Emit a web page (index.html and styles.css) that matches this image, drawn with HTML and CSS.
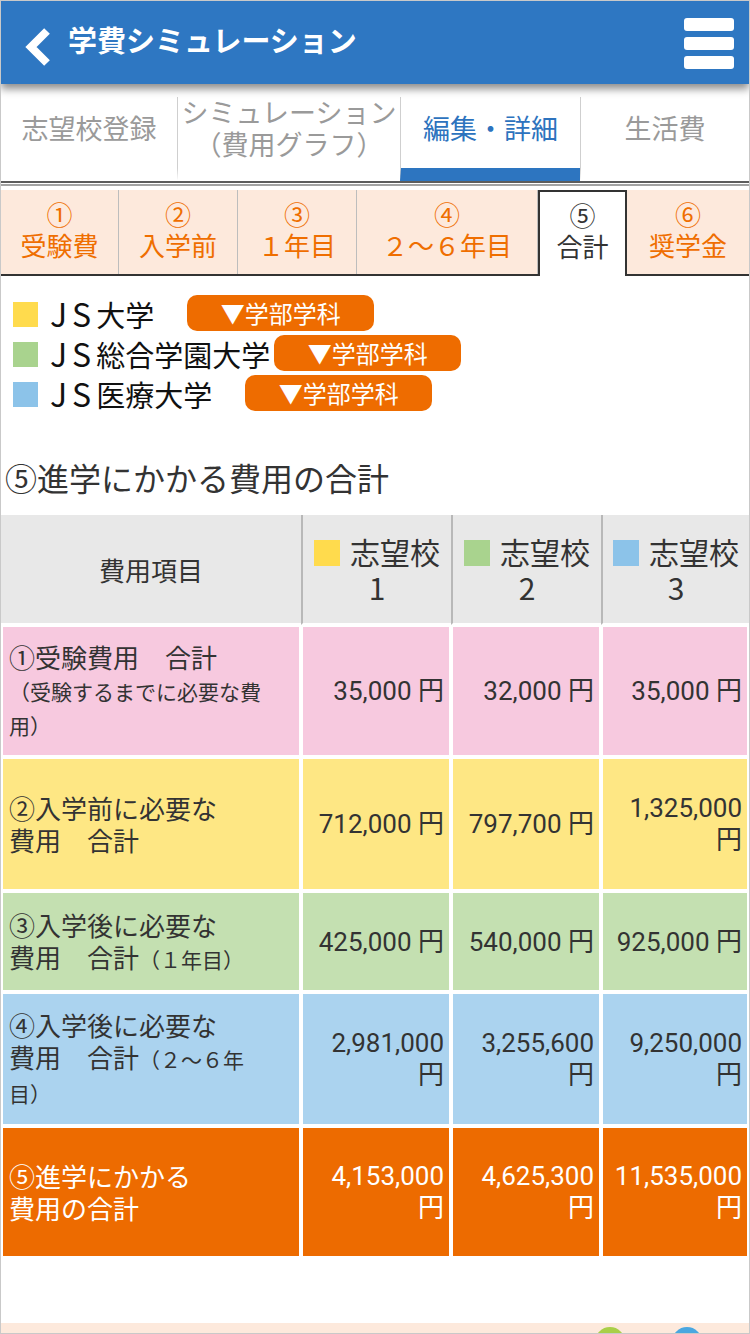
FILE: index.html
```html
<!DOCTYPE html>
<html lang="ja">
<head>
<meta charset="utf-8">
<title>学費シミュレーション</title>
<link rel="stylesheet" href="styles.css">
</head>
<body>
<div class="page">
  <header class="appbar">
    <svg class="back" width="30" height="40" viewBox="0 0 30 40" aria-hidden="true">
      <polyline points="24,4 8,20 24,36" fill="none" stroke="#fff" stroke-width="8" stroke-linejoin="miter"/>
    </svg>
    <h1 class="title">学費シミュレーション</h1>
    <div class="menu"><span></span><span></span><span></span></div>
  </header>

  <nav class="tabs-main">
    <div class="mtab w1">志望校登録</div>
    <div class="mtab w2">シミュレーション<br>（費用グラフ）</div>
    <div class="mtab w3 active">編集・詳細</div>
    <div class="mtab w4">生活費</div>
  </nav>
  <div class="rule"></div>

  <nav class="tabs-sub">
    <div class="stab s1">①<br>受験費</div>
    <div class="stab s2">②<br>入学前</div>
    <div class="stab s3">③<br>１年目</div>
    <div class="stab s4">④<br>２～６年目</div>
    <div class="stab s5 active">⑤<br>合計</div>
    <div class="stab s6">⑥<br>奨学金</div>
  </nav>

  <ul class="legend">
    <li class="legend-item"><span class="sq yellow"></span><span class="uni"><span class="js">JS</span>大学　</span><span class="btn">▼学部学科</span></li>
    <li class="legend-item"><span class="sq green"></span><span class="uni"><span class="js">JS</span>総合学園大学</span><span class="btn">▼学部学科</span></li>
    <li class="legend-item"><span class="sq blue"></span><span class="uni"><span class="js">JS</span>医療大学　</span><span class="btn">▼学部学科</span></li>
  </ul>

  <h2 class="heading">⑤進学にかかる費用の合計</h2>

  <table class="cost">
    <colgroup><col class="c1"><col class="c2"><col class="c3"><col class="c4"></colgroup>
    <thead>
      <tr>
        <th class="hd-item">費用項目</th>
        <th class="hd-school"><span class="hd-line"><span class="sq-s yellow"></span>志望校</span><span class="hd-line">1</span></th>
        <th class="hd-school"><span class="hd-line"><span class="sq-s green"></span>志望校</span><span class="hd-line">2</span></th>
        <th class="hd-school"><span class="hd-line"><span class="sq-s blue"></span>志望校</span><span class="hd-line">3</span></th>
      </tr>
    </thead>
    <tbody>
      <tr class="row h128 pink">
        <td class="label">①受験費用　合計<br><span class="sub">（受験するまでに必要な費用）</span></td>
        <td class="val">35,000 円</td>
        <td class="val">32,000 円</td>
        <td class="val">35,000 円</td>
      </tr>
      <tr class="row h130 yellow">
        <td class="label">②入学前に必要な<br>費用　合計</td>
        <td class="val">712,000 円</td>
        <td class="val">797,700 円</td>
        <td class="val">1,325,000 円</td>
      </tr>
      <tr class="row h97 green">
        <td class="label">③入学後に必要な<br>費用　合計<span class="sub">（１年目）</span></td>
        <td class="val">425,000 円</td>
        <td class="val">540,000 円</td>
        <td class="val">925,000 円</td>
      </tr>
      <tr class="row h130 blue">
        <td class="label">④入学後に必要な<br>費用　合計<span class="sub">（２～６年<br>目）</span></td>
        <td class="val">2,981,000 円</td>
        <td class="val">3,255,600 円</td>
        <td class="val">9,250,000 円</td>
      </tr>
      <tr class="row h128 orange">
        <td class="label">⑤進学にかかる<br>費用の合計</td>
        <td class="val">4,153,000 円</td>
        <td class="val">4,625,300 円</td>
        <td class="val">11,535,000 円</td>
      </tr>
    </tbody>
  </table>

  <div class="spacer"></div>
  <div class="footer-bar"><span class="dot dot-green"></span><span class="dot dot-blue"></span></div>
</div>
</body>
</html>
```

FILE: styles.css
```css
* { box-sizing: border-box; }
html, body { margin: 0; padding: 0; background: #fff; }
body { font-family: "Noto Sans CJK JP", "Noto Sans", sans-serif; color: #333; }

.page {
  width: 750px;
  height: 1334px;
  border: 1px solid #c9c9c9;
  display: flex;
  flex-direction: column;
  overflow: hidden;
}

/* app bar */
.appbar {
  height: 83px;
  flex: none;
  background: #2e77c2;
  display: flex;
  align-items: center;
  padding: 0 15px 0 22px;
  box-shadow: 0 5px 8px rgba(0, 0, 0, 0.45);
  position: relative;
  z-index: 2;
}
.back { flex: none; margin-top: 8px; margin-right: 15px; }
.title {
  margin: 0 0 7px;
  flex: 1;
  font-size: 29px;
  font-weight: 700;
  color: #fff;
  line-height: 1;
}
.menu { display: flex; flex-direction: column; gap: 6px; margin-top: 2px; }
.menu span {
  display: block;
  width: 50px;
  height: 13px;
  background: #fff;
  border-radius: 3px;
}

/* main tabs */
.tabs-main {
  flex: none;
  display: flex;
  margin-top: 13px;
  height: 86px;
  border-bottom: 2px solid #5c5c5c;
}
.mtab {
  display: flex;
  align-items: center;
  justify-content: center;
  text-align: center;
  font-size: 27px;
  line-height: 32px;
  color: #9a9a9a;
  border-left: 1px solid #cfcfcf;
  border-bottom: 13px solid #fff;
  padding-bottom: 10px;
}
.mtab.w1 { width: 176px; border-left: none; }
.mtab.w2 { width: 223px; }
.mtab.w3 { width: 180px; }
.mtab.w4 { width: 169px; }
.mtab.active { color: #2d73be; border-bottom-color: #2d75c0; }
.rule { flex: none; height: 2px; margin-top: 1px; background: #a3a3a3; }

/* sub tabs */
.tabs-sub {
  flex: none;
  display: flex;
  margin-top: 4px;
  height: 86px;
  border-bottom: 2px solid #333;
}
.stab {
  background: #fde9dc;
  color: #ef6e00;
  font-size: 26px;
  line-height: 31px;
  text-align: center;
  display: flex;
  align-items: center;
  justify-content: center;
  border-right: 1px solid #bdbdbd;
  padding-bottom: 6px;
}
.stab.s1 { width: 118px; }
.stab.s2 { width: 119px; }
.stab.s3 { width: 119px; }
.stab.s4 { width: 181px; }
.stab.s5 { width: 89px; }
.stab.s6 { width: 122px; border-right: none; }
.stab.active {
  background: #fff;
  color: #333;
  border: 2px solid #333;
  border-bottom: none;
  margin-bottom: -2px;
  padding-bottom: 8px;
}

/* legend */
.legend {
  flex: none;
  list-style: none;
  margin: 19px 0 0;
  padding: 0 0 0 12px;
  display: flex;
  flex-direction: column;
  gap: 4px;
}
.legend-item { display: flex; align-items: center; height: 36px; }
.sq { width: 25px; height: 25px; flex: none; margin-right: 12px; margin-top: 2px; }
.uni { font-size: 29px; color: #111; line-height: 36px; white-space: pre; }
.js { font-size: 32px; letter-spacing: 5px; }
.btn {
  margin-left: 4px;
  width: 187px;
  height: 36px;
  border-radius: 10px;
  background: #ee6c00;
  color: #fff;
  font-size: 24px;
  line-height: 36px;
  text-align: center;
}
.yellow { background: #ffdb4d; }
.green { background: #a9d38e; }
.blue { background: #8cc3e9; }

/* heading */
.heading {
  flex: none;
  margin: 46px 0 0;
  padding-left: 4px;
  font-size: 32px;
  font-weight: 400;
  line-height: 40px;
  color: #333;
}

/* table */
.cost {
  flex: none;
  margin-top: 18px;
  width: 748px;
  table-layout: fixed;
  border-collapse: separate;
  border-spacing: 0;
}
.c1 { width: 300px; }
.c2 { width: 150px; }
.c3 { width: 150px; }
.c4 { width: 148px; }
.cost th {
  background: #e8e8e8;
  height: 110px;
  padding: 0;
  font-weight: 400;
  color: #333;
  border-bottom: 2px solid #fff;
}
.hd-item { font-size: 26px; }
.hd-school {
  font-size: 30px;
  border-left: 2px solid #b8b8b8;
}
.hd-line { display: block; height: 36px; line-height: 36px; white-space: nowrap; }
.sq-s {
  display: inline-block;
  width: 26px;
  height: 26px;
  margin-right: 10px;
  vertical-align: -2px;
}
.cost td {
  border: 2px solid #fff;
  padding: 0 5px 0 6px;
  vertical-align: middle;
  font-size: 26px;
  line-height: 32px;
  color: #333;
}
.cost td.label { padding-right: 22px; text-align: left; }
.row.h128 td { height: 132px; }
.row.h130 td { height: 134px; }
.row.h97 td { height: 101px; }
.row.pink td { background: #f7c9df; }
.row.yellow td { background: #fee784; }
.row.green td { background: #c4e0b1; }
.row.blue td { background: #abd3ef; }
.row.orange td { background: #ed6b00; color: #fff; }
.sub { font-size: 21px; }
.val {
  text-align: right;
  font-family: Roboto, "Noto Sans CJK JP", sans-serif;
}

.spacer { flex: 1; }
.footer-bar {
  flex: none;
  height: 10px;
  background: #fde9dc;
  display: flex;
  align-items: flex-start;
  padding-left: 594px;
  gap: 47px;
  overflow: hidden;
}
.dot { width: 30px; height: 30px; border-radius: 50%; flex: none; margin-top: 4px; }
.dot-green { background: #a9cf48; }
.dot-blue { background: #4aa7e0; }
```
